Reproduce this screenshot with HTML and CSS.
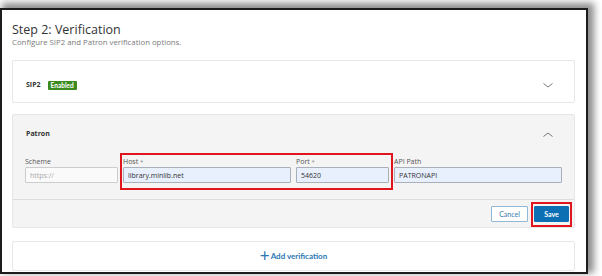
FILE: index.html
```html
<!DOCTYPE HTML>
<html>

<head>
    <meta charset="utf-8">
    <title>Step 2: Verification</title>
    <link rel="stylesheet" href="styles.css">
</head>

<body>
    <div class="frame">
        <div class="head">
            <h2 class="title">Step 2: Verification</h2>
            <p class="subtitle">Configure SIP2 and Patron verification options.</p>
        </div>

        <section class="card sip">
            <span class="card-name">SIP2</span>
            <span class="badge">Enabled</span>
            <svg class="chevron" width="10" height="5" viewBox="0 0 10 5"><path d="M0.5 0.5 L5 4 L9.5 0.5" /></svg>
        </section>

        <section class="card patron">
            <div class="patron-head">
                <span class="card-name">Patron</span>
                <svg class="chevron up" width="10" height="5" viewBox="0 0 10 5"><path d="M0.5 4.5 L5 1 L9.5 4.5" /></svg>
            </div>
            <div class="fields">
                <div class="field narrow">
                    <label>Scheme</label>
                    <input class="input disabled" placeholder="https://" disabled>
                </div>
                <div class="group">
                    <div class="field wide">
                        <label>Host <span class="req">*</span></label>
                        <input class="input filled" value="library.minlib.net">
                    </div>
                    <div class="field narrow">
                        <label>Port <span class="req">*</span></label>
                        <input class="input filled" value="54620">
                    </div>
                </div>
                <div class="field wide">
                    <label>API Path</label>
                    <input class="input filled" value="PATRONAPI">
                </div>
            </div>
            <div class="patron-foot">
                <button class="btn cancel">Cancel</button>
                <button class="btn save">Save</button>
            </div>
        </section>

        <section class="card add">
            <span class="plus">+</span><span class="add-text">Add verification</span>
        </section>
    </div>
</body>

</html>
```

FILE: styles.css
```css
html, body {
	background: #ffffff;
	padding: 0;
	border: 0;
	margin: 0;
	height: 100%;
}

body {
    font-family: "Open Sans", "Liberation Sans", sans-serif;
    color: #333333;
    overflow: hidden;
}

.frame {
    box-sizing: border-box;
    width: 588px;
    height: 266px;
    margin-top: 8px;
    padding: 12px 11px 0 10px;
    border: 2px solid #1c1c1c;
    box-shadow: 4px -3px 7px 2px rgba(0, 0, 0, 0.45);
    display: flex;
    flex-direction: column;
}

.title {
    margin: 0;
    font-size: 12.5px;
    line-height: 15px;
    font-weight: 400;
    color: #333333;
}

.subtitle {
    margin: 1px 0 0 0;
    font-size: 7.8px;
    line-height: 9px;
    color: #7a7a7a;
}

.card {
    box-sizing: border-box;
    border: 1px solid #e6e6e6;
    border-radius: 2px;
    background: #ffffff;
}

.card-name {
    font-size: 7px;
    font-weight: 700;
    color: #333333;
    line-height: 10px;
}

.chevron {
    margin-left: auto;
    fill: none;
    stroke: #777777;
    stroke-width: 1;
}

/* SIP2 */
.sip {
    margin-top: 13px;
    height: 43px;
    padding: 7px 21px 0 13px;
    display: flex;
    align-items: center;
}

.badge {
    margin-left: 7px;
    background: #3b8a1f;
    color: #ffffff;
    font-family: Lato, "Liberation Sans", sans-serif;
    font-size: 6.5px;
    font-weight: 700;
    line-height: 9px;
    padding: 0 3px;
    border-radius: 1px;
}

/* Patron */
.patron {
    margin-top: 11px;
    background: #f4f4f4;
}

.patron-head {
    box-sizing: border-box;
    height: 43px;
    padding: 14px 21px 0 13px;
    display: flex;
    align-items: flex-start;
}

.patron-head .chevron {
    margin-top: 3px;
}

.fields {
    display: flex;
    gap: 5px;
    padding: 0 12px 16px 12px;
}

.group {
    position: relative;
    display: flex;
    gap: 5px;
}

.group::after {
    content: "";
    position: absolute;
    top: -5px;
    left: -3px;
    right: -4px;
    bottom: -7px;
    border: 2px solid #e0161f;
}

.field {
    display: flex;
    flex-direction: column;
}

.field.narrow {
    width: 93px;
}

.field.wide {
    width: 168px;
}

.field label {
    font-size: 7px;
    line-height: 8px;
    color: #555555;
    margin-bottom: 1px;
}

.req {
    color: #888888;
    font-size: 6px;
}

.input {
    box-sizing: border-box;
    height: 16px;
    width: 100%;
    padding: 0 4px;
    margin: 0;
    font-family: "Open Sans", "Liberation Sans", sans-serif;
    font-size: 7px;
    color: #333333;
    border: 1px solid #a9b0bb;
    border-radius: 1px;
    outline: none;
}

.input.filled {
    background: #e8f0fe;
}

.input.disabled {
    background: #fafafa;
    border-color: #cccccc;
}

.input.disabled::placeholder {
    color: #a8a8a8;
}

.patron-foot {
    border-top: 1px solid #dddddd;
    padding: 6px 5px 5px 0;
    display: flex;
    justify-content: flex-end;
    gap: 6px;
}

.btn {
    box-sizing: border-box;
    height: 16px;
    margin: 0;
    padding: 0;
    font-family: Lato, "Liberation Sans", sans-serif;
    font-size: 7px;
    border-radius: 1px;
    cursor: pointer;
}

.cancel {
    width: 37px;
    background: #ffffff;
    color: #3a78ad;
    border: 1px solid #8fb8d6;
}

.save {
    position: relative;
    width: 35px;
    background: #0c6fb3;
    color: #ffffff;
    font-weight: 700;
    border: 1px solid #0c6fb3;
}

.save::after {
    content: "";
    position: absolute;
    top: -5px;
    left: -4px;
    right: -4px;
    bottom: -6px;
    border: 2px solid #e0161f;
}

/* Add verification */
.add {
    margin-top: 13px;
    height: 30px;
    display: flex;
    align-items: center;
    justify-content: center;
    color: #2a77b5;
    font-family: Lato, "Liberation Sans", sans-serif;
}

.plus {
    font-size: 17px;
    line-height: 14px;
    font-weight: 400;
    margin-right: 1px;
}

.add-text {
    font-size: 8px;
    font-weight: 700;
    line-height: 10px;
}
```
